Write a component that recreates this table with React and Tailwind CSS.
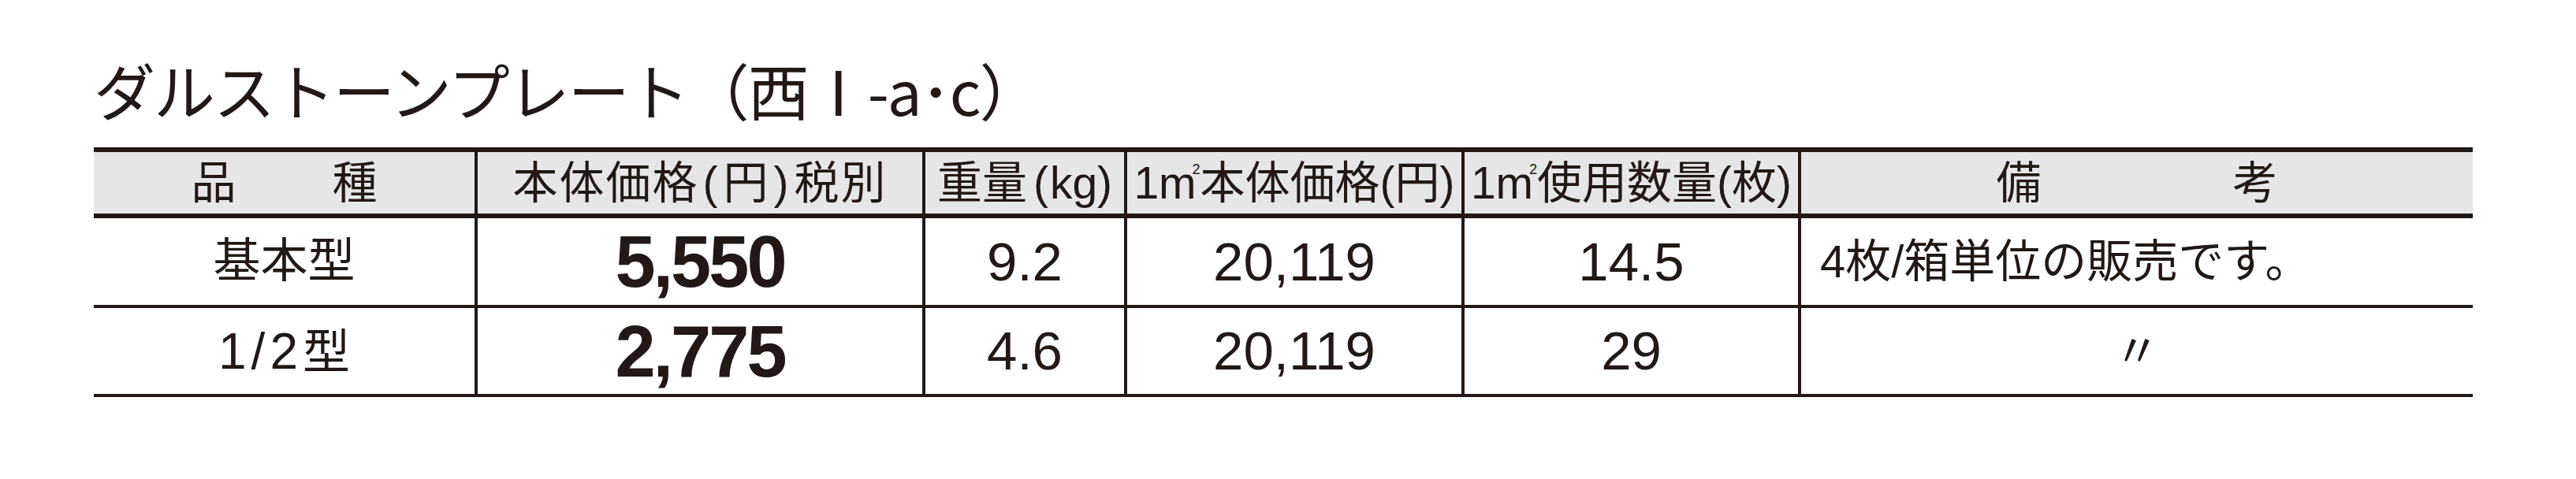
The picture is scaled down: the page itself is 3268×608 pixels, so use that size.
import React from "react";

const head = "flex items-center justify-center border-l-4 border-[#231815]";
const cell = "flex items-center justify-center border-l-4 border-[#231815]";

const rows = [
  { name: "基本型", price: "5,550", weight: "9.2", perM2: "20,119", count: "14.5", note: "4枚/箱単位の販売です。" },
  { name: "1/2型", price: "2,775", weight: "4.6", perM2: "20,119", count: "29", note: "〃" },
];

function Name({ value }) {
  if (value === "1/2型") {
    return (
      <span className="leading-none">
        <span className="text-[64px] tracking-[6px]">1/2</span>
        <span className="text-[60px]">型</span>
      </span>
    );
  }
  return <span className="text-[60px] leading-none">{value}</span>;
}

const M2 = () => (
  <>
    m<span className="inline-block align-top text-[18px] leading-none -ml-[5px] mt-[2px]">2</span>
  </>
);

export default function App() {
  return (
    <div className="w-[3268px] h-[608px] bg-white text-[#231815] pl-[119px] pt-[74px] font-['Liberation_Sans','Noto_Sans_CJK_JP',sans-serif]">
      <h1 className="text-[78px] leading-none font-normal tracking-[-2px] font-['Noto_Sans_CJK_JP',sans-serif]">
        ダルストーンプレート（西Ⅰ-a･c）
      </h1>

      <div className="mt-[35px] w-[3018px]">
        {/* header */}
        <div className="grid grid-cols-[483px_568px_256px_428px_427px_856px] h-[90px] border-y-[6px] border-[#231815] bg-[#e6e6e6] text-[57px] leading-none">
          <div className="flex items-center justify-center gap-[122px]">
            <span>品</span>
            <span>種</span>
          </div>
          <div className={head}>
            <span className="tracking-[2px]">
              本体価格<span className="mx-[5px]">(</span>円<span className="mx-[5px]">)</span>税別
            </span>
          </div>
          <div className={head}>
            <span>
              重量<span className="ml-[8px] mr-[2px]">(</span>kg)
            </span>
          </div>
          <div className={head}>
            <span>1<M2 />本体価格(円)</span>
          </div>
          <div className={head}>
            <span>1<M2 />使用数量(枚)</span>
          </div>
          <div className={`${head} gap-[243px]`}>
            <span>備</span>
            <span>考</span>
          </div>
        </div>

        {/* body */}
        {rows.map((r, i) => (
          <div
            key={r.name}
            className={`grid grid-cols-[483px_568px_256px_428px_427px_856px] border-b-4 border-[#231815] ${i === 0 ? "h-[114px]" : "h-[113px]"}`}
          >
            <div className="flex items-center justify-center">
              <Name value={r.name} />
            </div>
            <div className={cell}>
              <span className="text-[92px] font-bold tracking-[-3px] leading-none">{r.price}</span>
            </div>
            <div className={cell}>
              <span className="text-[69px] leading-none">{r.weight}</span>
            </div>
            <div className={cell}>
              <span className="text-[69px] leading-none">{r.perM2}</span>
            </div>
            <div className={cell}>
              <span className="text-[69px] leading-none">{r.count}</span>
            </div>
            {r.note === "〃" ? (
              <div className={cell}>
                <span className="text-[58px] leading-none">{r.note}</span>
              </div>
            ) : (
              <div className="flex items-center border-l-4 border-[#231815] pl-[24px]">
                <span className="text-[58px] leading-none">{r.note}</span>
              </div>
            )}
          </div>
        ))}
      </div>
    </div>
  );
}
